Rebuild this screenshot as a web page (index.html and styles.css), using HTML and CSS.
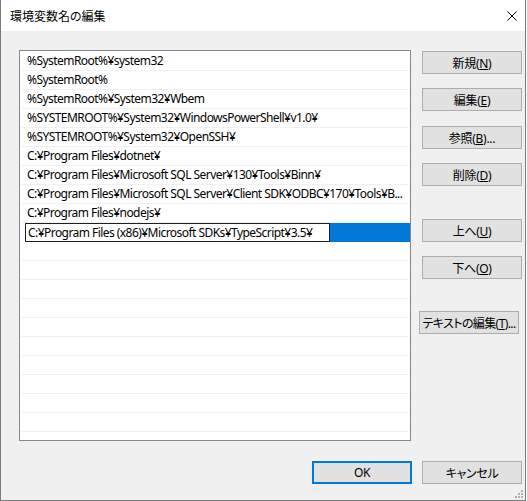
FILE: index.html
```html
<!DOCTYPE html>
<html lang="ja">
<head>
<meta charset="utf-8">
<title>環境変数名の編集</title>
<link rel="stylesheet" href="styles.css">
</head>
<body>
<div class="window">
  <div class="titlebar">
    <span class="title">環境変数名の編集</span>
    <svg class="close" width="10" height="10" viewBox="0 0 10 10"><path d="M0.5 0.5 L9.5 9.5 M9.5 0.5 L0.5 9.5" stroke="#000" stroke-width="1" fill="none"/></svg>
  </div>
  <div class="body">
    <div class="main">
      <div class="list">
        <div class="row">%SystemRoot%¥system32</div>
        <div class="row">%SystemRoot%</div>
        <div class="row">%SystemRoot%¥System32¥Wbem</div>
        <div class="row">%SYSTEMROOT%¥System32¥WindowsPowerShell¥v1.0¥</div>
        <div class="row">%SYSTEMROOT%¥System32¥OpenSSH¥</div>
        <div class="row">C:¥Program Files¥dotnet¥</div>
        <div class="row">C:¥Program Files¥Microsoft SQL Server¥130¥Tools¥Binn¥</div>
        <div class="row">C:¥Program Files¥Microsoft SQL Server¥Client SDK¥ODBC¥170¥Tools¥B...</div>
        <div class="row">C:¥Program Files¥nodejs¥</div>
        <div class="row editing"><div class="edit">C:¥Program Files (x86)¥Microsoft SDKs¥TypeScript¥3.5¥</div><div class="sel"></div></div>
        <div class="row"></div>
        <div class="row"></div>
        <div class="row"></div>
        <div class="row"></div>
        <div class="row"></div>
        <div class="row"></div>
        <div class="row"></div>
        <div class="row"></div>
        <div class="row"></div>
        <div class="row"></div>
        <div class="row"></div>
      </div>
      <div class="side">
        <button class="btn">新規(<u>N</u>)</button>
        <button class="btn gap15">編集(<u>E</u>)</button>
        <button class="btn gap15b">参照(<u>B</u>)...</button>
        <button class="btn">削除(<u>D</u>)</button>
        <button class="btn gap34">上へ(<u>U</u>)</button>
        <button class="btn">下へ(<u>O</u>)</button>
        <button class="btn gap33 shift">テキストの編集(<u>T</u>)...</button>
      </div>
    </div>
    <div class="footer">
      <button class="btn ok">OK</button>
      <button class="btn">キャンセル</button>
    </div>
  </div>
  <svg class="grip" width="8" height="8" viewBox="0 0 8 8">
    <rect x="6" y="0" width="2" height="2" fill="#b4b4b4"/>
    <rect x="3" y="3" width="2" height="2" fill="#b4b4b4"/>
    <rect x="6" y="3" width="2" height="2" fill="#b4b4b4"/>
    <rect x="0" y="6" width="2" height="2" fill="#b4b4b4"/>
    <rect x="3" y="6" width="2" height="2" fill="#b4b4b4"/>
    <rect x="6" y="6" width="2" height="2" fill="#b4b4b4"/>
  </svg>
</div>
</body>
</html>
```
FILE: styles.css
```css
body {
  margin: 0;
  background: #ffffff;
  font-family: "Noto Sans", "Noto Sans CJK JP", sans-serif;
  font-size: 12px;
  color: #000;
}

.window {
  position: relative;
  width: 526px;
  height: 501px;
  box-sizing: border-box;
  border: 1px solid #7a7a7a;
  border-top: 0;
  background: #f0f0f0;
  display: flex;
  flex-direction: column;
}

.titlebar {
  height: 31px;
  background: #ffffff;
  display: flex;
  align-items: center;
  justify-content: space-between;
  padding: 0 8px 0 9px;
}

.title {
  font-family: "Noto Sans CJK JP", sans-serif;
  font-feature-settings: "palt";
  font-size: 12px;
  line-height: 31px;
}

.close {
  display: block;
}

.body {
  padding: 19px 3px 0 18px;
}

.main {
  display: flex;
  gap: 11px;
}

.list {
  width: 392px;
  height: 391px;
  box-sizing: border-box;
  border: 1px solid #828790;
  background: #ffffff;
  padding-top: 1px;
  overflow: hidden;
  letter-spacing: -0.55px;
}

.row {
  height: 19px;
  box-sizing: border-box;
  border-bottom: 1px solid #f0f0f0;
  margin: 0 1px;
  padding-left: 6px;
  line-height: 18px;
  white-space: nowrap;
  overflow: hidden;
}

.row.editing {
  border-bottom: 0;
  margin: 0;
  padding-left: 5px;
  display: flex;
}

.edit {
  width: 305px;
  height: 19px;
  box-sizing: border-box;
  border: 1px solid #1e1e1e;
  padding-left: 2px;
  line-height: 17px;
  background: #ffffff;
  white-space: nowrap;
  overflow: hidden;
}

.sel {
  flex: 1;
  background: #0078d7;
}

.side {
  width: 100px;
  display: flex;
  flex-direction: column;
  padding-top: 1px;
  gap: 14px;
}

.btn {
  width: 100px;
  height: 23px;
  box-sizing: border-box;
  border: 1px solid #adadad;
  background: #e1e1e1;
  font-family: "Noto Sans", "Noto Sans CJK JP", sans-serif;
  font-feature-settings: "palt";
  font-size: 12px;
  color: #000;
  padding: 0;
  margin: 0;
  white-space: nowrap;
  letter-spacing: -0.3px;
}

.gap15 { margin-top: 0; }
.gap15b { margin-top: 1px; }
.gap34 { margin-top: 19px; }
.gap33 { margin-top: 18px; }
.shift { margin-left: -3px; letter-spacing: -0.6px; }

.ok {
  border: 2px solid #0078d7;
}

.footer {
  display: flex;
  justify-content: flex-end;
  gap: 10px;
  margin-top: 20px;
}

.grip {
  position: absolute;
  right: 2px;
  bottom: 2px;
}
```
